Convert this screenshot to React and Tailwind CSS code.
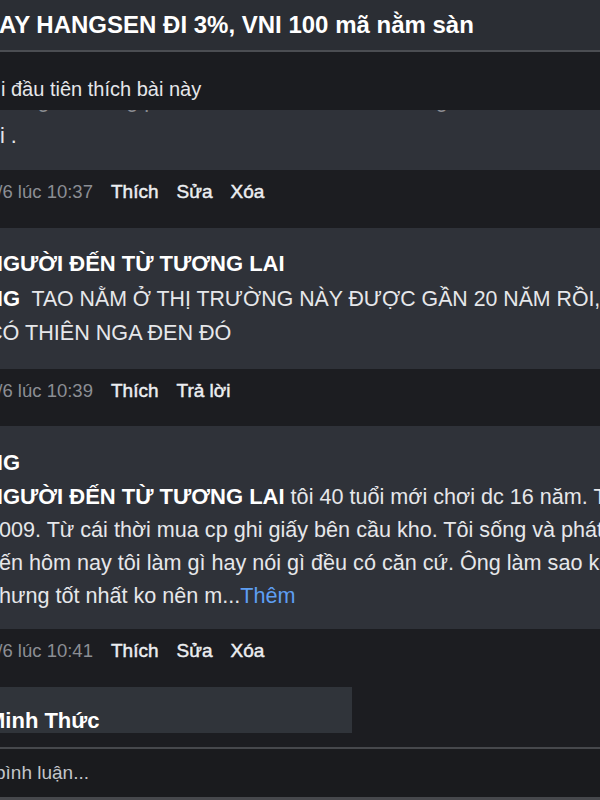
import React from 'react'

function Actions({ date, items, h = 'h-[58px]' }) {
  return (
    <div className={`${h} bg-[#1c1d21] px-[12px] pt-[10px]`}>
      <div className="flex items-center whitespace-nowrap leading-[24px]">
        <span className="text-[18.5px] text-[#8b8e94]">{date}</span>
        {items.map(t => (
          <span key={t} className="ml-[18px] text-[19px] text-[#eceef1] [-webkit-text-stroke:0.45px_#eceef1]">{t}</span>
        ))}
      </div>
    </div>
  )
}

export default function App() {
  return (
    <div className="flex h-[800px] w-[600px] flex-col overflow-hidden bg-[#1c1d21] font-['Liberation_Sans',Arial,sans-serif] text-[#e6e7ea]">
      <div className="flex h-[50px] shrink-0 items-center bg-[#2b2e34]">
        <h1 className="-ml-[1px] whitespace-nowrap text-[24px] font-bold text-white">
          AY HANGSEN ĐI 3%, VNI 100 mã nằm sàn
        </h1>
      </div>
      <div className="h-[2px] shrink-0 bg-[#4b4d52]" />
      <div className="h-[58px] shrink-0 bg-[#1b1c20] pt-[24px]">
        <p className="ml-[1px] whitespace-nowrap text-[20px] leading-[26px]">i đầu tiên thích bài này</p>
      </div>

      <div className="h-[623px] shrink-0 overflow-hidden">
        <div className="-ml-[25px]">
          <div className="h-[60px] overflow-hidden bg-[#2f3239] px-[12px]">
            <p className="-mt-[26px] whitespace-nowrap text-[21.6px] leading-[32.5px] text-[#8a8c91]">
              nhưng mà cũng phải chịu khó học hỏi thị trường thì mới được nhé bạn ạ cố lên nhé
            </p>
            <p className="whitespace-nowrap pl-[13px] pt-[3px] text-[21.6px] leading-[32.5px]">i .</p>
          </div>
          <Actions date="1/6 lúc 10:37" items={['Thích', 'Sửa', 'Xóa']} />

          <div className="bg-[#2f3239] px-[12px] pb-[20px] pt-[18px] text-[21.6px]">
            <p className="whitespace-nowrap text-[22px] font-bold leading-[36px] text-white">NGƯỜI ĐẾN TỪ TƯƠNG LAI</p>
            <p className="whitespace-nowrap text-[21.3px] leading-[33px]">
              <span className="text-[22px] font-bold text-white">NG</span>{'\u00a0 '}TAO NẰM Ở THỊ TRƯỜNG NÀY ĐƯỢC GẦN 20 NĂM RỒI, KHÔNG
            </p>
            <p className="whitespace-nowrap leading-[33px]">CÓ THIÊN NGA ĐEN ĐÓ</p>
          </div>
          <Actions date="1/6 lúc 10:39" items={['Thích', 'Trả lời']} h="h-[57px]" />

          <div className="bg-[#2f3239] px-[12px] pb-[17px] pt-[19px] text-[21.6px]">
            <p className="whitespace-nowrap text-[22px] font-bold leading-[36px] text-white">NG</p>
            <p className="-mt-[1px] whitespace-nowrap leading-[33px]">
              <span className="text-[22px] font-bold text-white">NGƯỜI ĐẾN TỪ TƯƠNG LAI</span> tôi 40 tuổi mới chơi dc 16 năm. Từ năm
            </p>
            <p className="whitespace-nowrap leading-[33px]">2009. Từ cái thời mua cp ghi giấy bên cầu kho. Tôi sống và phát triển</p>
            <p className="whitespace-nowrap leading-[33px]">đến hôm nay tôi làm gì hay nói gì đều có căn cứ. Ông làm sao kệ ông</p>
            <p className="whitespace-nowrap leading-[33px]">
              nhưng tốt nhất ko nên m...<span className="text-[#5e9ef2]">Thêm</span>
            </p>
          </div>
          <Actions date="1/6 lúc 10:41" items={['Thích', 'Sửa', 'Xóa']} />

          <div className="w-[377px] bg-[#30343a] px-[12px] pb-[16px] pt-[16px] text-[21.6px]">
            <p className="whitespace-nowrap text-[22px] font-bold leading-[36px] text-white">Minh Thức</p>
            <p className="whitespace-nowrap leading-[33px]">mua đi bán lại thì cũng thế thôi</p>
          </div>
        </div>
      </div>

      <div className="h-[14px] shrink-0 bg-[#1c1d21]" />
      <div className="h-[2px] shrink-0 bg-[#46484c]" />
      <div className="h-[48px] shrink-0 bg-[#1a1b1e] pt-[12px]">
        <p className="-ml-[5px] whitespace-nowrap text-[19px] leading-[24px] text-[#c3c5c9]">bình luận...</p>
      </div>
      <div className="h-[3px] shrink-0 bg-[#46484c]" />
    </div>
  )
}
